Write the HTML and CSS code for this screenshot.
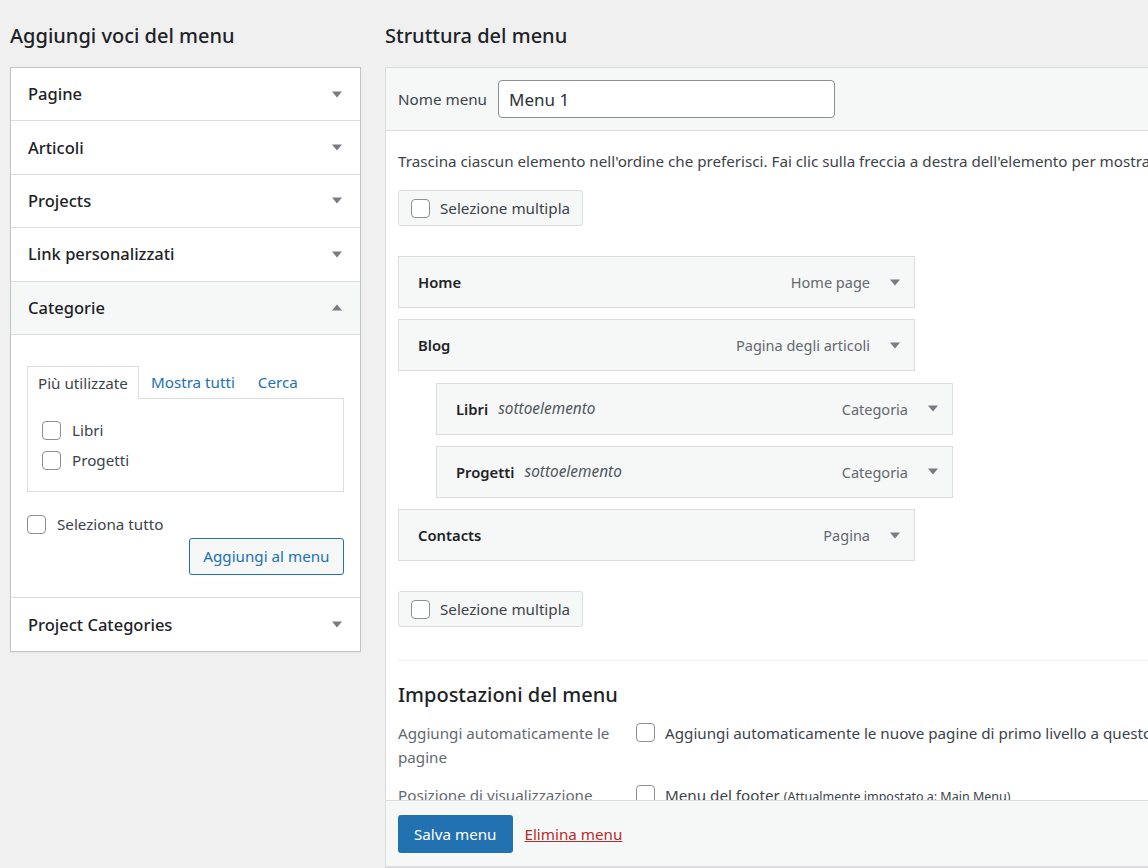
FILE: index.html
```html
<!DOCTYPE html>
<html lang="it">
<head>
<meta charset="utf-8">
<title>Menu</title>
<link rel="stylesheet" href="styles.css">
</head>
<body>
<div class="page">
  <div class="col-left">
    <h2 class="col-title">Aggiungi voci del menu</h2>
    <div class="acc">
      <div class="acc-row"><span class="acc-title">Pagine</span><svg class="arrow" viewBox="0 0 10 6"><polygon points="0,0 10,0 5,6"/></svg></div>
      <div class="acc-row"><span class="acc-title">Articoli</span><svg class="arrow" viewBox="0 0 10 6"><polygon points="0,0 10,0 5,6"/></svg></div>
      <div class="acc-row"><span class="acc-title">Projects</span><svg class="arrow" viewBox="0 0 10 6"><polygon points="0,0 10,0 5,6"/></svg></div>
      <div class="acc-row"><span class="acc-title">Link personalizzati</span><svg class="arrow" viewBox="0 0 10 6"><polygon points="0,0 10,0 5,6"/></svg></div>
      <div class="acc-row open"><span class="acc-title">Categorie</span><svg class="arrow" viewBox="0 0 10 6"><polygon points="0,6 10,6 5,0"/></svg></div>
      <div class="acc-body">
        <div class="tabs">
          <span class="tab active">Più utilizzate</span>
          <span class="tab">Mostra tutti</span>
          <span class="tab">Cerca</span>
        </div>
        <div class="tab-panel">
          <label class="chk-line"><span class="cb"></span>Libri</label>
          <label class="chk-line"><span class="cb"></span>Progetti</label>
        </div>
        <label class="chk-line select-all"><span class="cb"></span>Seleziona tutto</label>
        <div class="add-row"><span class="btn-secondary">Aggiungi al menu</span></div>
      </div>
      <div class="acc-row last"><span class="acc-title">Project Categories</span><svg class="arrow" viewBox="0 0 10 6"><polygon points="0,0 10,0 5,6"/></svg></div>
    </div>
  </div>

  <div class="col-right">
    <h2 class="col-title">Struttura del menu</h2>
    <div class="editor">
      <div class="editor-head">
        <span class="name-label">Nome menu</span>
        <span class="name-input">Menu 1</span>
      </div>
      <div class="editor-body">
        <p class="hint">Trascina ciascun elemento nell'ordine che preferisci. Fai clic sulla freccia a destra dell'elemento per mostrare ulteriori opzioni di configurazione.</p>
        <span class="bulk"><span class="cb"></span>Selezione multipla</span>
        <ul class="items">
          <li class="item"><span class="item-title">Home</span><span class="item-type">Home page</span><svg class="arrow" viewBox="0 0 10 6"><polygon points="0,0 10,0 5,6"/></svg></li>
          <li class="item"><span class="item-title">Blog</span><span class="item-type">Pagina degli articoli</span><svg class="arrow" viewBox="0 0 10 6"><polygon points="0,0 10,0 5,6"/></svg></li>
          <li class="item sub"><span class="item-title">Libri</span><em class="item-sub">sottoelemento</em><span class="item-type">Categoria</span><svg class="arrow" viewBox="0 0 10 6"><polygon points="0,0 10,0 5,6"/></svg></li>
          <li class="item sub"><span class="item-title">Progetti</span><em class="item-sub">sottoelemento</em><span class="item-type">Categoria</span><svg class="arrow" viewBox="0 0 10 6"><polygon points="0,0 10,0 5,6"/></svg></li>
          <li class="item"><span class="item-title">Contacts</span><span class="item-type">Pagina</span><svg class="arrow" viewBox="0 0 10 6"><polygon points="0,0 10,0 5,6"/></svg></li>
        </ul>
        <span class="bulk"><span class="cb"></span>Selezione multipla</span>
        <div class="settings">
          <h3 class="settings-title">Impostazioni del menu</h3>
          <div class="set-row">
            <div class="set-label">Aggiungi automaticamente le pagine</div>
            <label class="set-value"><span class="cb"></span>Aggiungi automaticamente le nuove pagine di primo livello a questo menu</label>
          </div>
          <div class="set-row">
            <div class="set-label">Posizione di visualizzazione</div>
            <label class="set-value"><span class="cb"></span><span>Menu del footer <small class="note">(Attualmente impostato a: Main Menu)</small></span></label>
          </div>
        </div>
      </div>
      <div class="editor-foot">
        <span class="btn-primary">Salva menu</span>
        <a class="delete" href="#">Elimina menu</a>
      </div>
    </div>
  </div>
</div>
</body>
</html>
```
FILE: styles.css
```css
* { box-sizing: border-box; }
html, body { margin: 0; padding: 0; }
body {
  background: #f0f0f1;
  font-family: "Noto Sans", "Open Sans", sans-serif;
  font-size: 15.2px;
  color: #3c434a;
  height: 868px;
  overflow: hidden;
}
.page {
  display: flex;
  padding-left: 10px;
  gap: 24px;
}
.col-left { width: 351px; flex: none; }
.col-right { flex: 1; min-width: 0; }
.col-title {
  margin: 0;
  padding-top: 23px;
  height: 67px;
  font-size: 20px;
  line-height: 26px;
  font-weight: 500;
  color: #1d2327;
}
.acc {
  background: #fff;
  border: 1px solid #c3c4c7;
  box-shadow: 0 1px 1px rgba(0,0,0,.04);
}
.acc-row {
  height: 53.4px;
  display: flex;
  align-items: center;
  justify-content: space-between;
  padding: 0 18px 0 17px;
  border-bottom: 1px solid #dcdcde;
}
.acc-row.open { background: #f6f7f7; }
.acc-row.last { border-bottom: 0; }
.acc-title {
  font-size: 16.5px;
  font-weight: 500;
  color: #1d2327;
  margin-top: -1px;
}
.arrow { width: 10px; height: 7px; fill: #787c82; flex: none; }
.acc-body {
  padding: 30px 16px 22px 16px;
  border-bottom: 1px solid #dcdcde;
}
.tabs { display: flex; align-items: flex-end; height: 33px; }
.tab {
  color: #2271b1;
  padding: 0 11px;
  line-height: 32px;
}
.tab.active {
  color: #3c434a;
  background: #fff;
  border: 1px solid #dcdcde;
  border-bottom: 0;
  height: 33px;
  margin-bottom: -1px;
  position: relative;
  padding: 0 10px;
}
.tab + .tab:not(.active) { padding-left: 12px; padding-right: 11px; }
.tab-panel {
  border: 1px solid #dcdcde;
  height: 94px;
  padding: 22px 14px 0 14px;
  display: flex;
  flex-direction: column;
  gap: 11px;
}
.chk-line {
  display: flex;
  align-items: center;
  gap: 11px;
  color: #3c434a;
  line-height: 19px;
}
.cb {
  width: 19px;
  height: 19px;
  border: 1px solid #8c8f94;
  border-radius: 4px;
  background: #fff;
  flex: none;
  display: inline-block;
}
.select-all { margin-top: 23px; }
.add-row { display: flex; justify-content: flex-end; margin-top: 4px; }
.btn-secondary {
  display: inline-flex;
  align-items: center;
  height: 37px;
  padding: 0 13.5px;
  border: 1px solid #2271b1;
  border-radius: 3px;
  background: #f6f7f7;
  color: #2271b1;
}

.editor {
  background: #fff;
  border: 1px solid #dcdcde;
  border-right: 0;
  height: 801px;
  display: flex;
  flex-direction: column;
}
.editor-head {
  background: #f6f7f7;
  border-bottom: 1px solid #dcdcde;
  height: 63px;
  display: flex;
  align-items: center;
  padding-left: 12px;
  gap: 11px;
  flex: none;
}
.name-label { color: #3c434a; }
.name-input {
  width: 337px;
  height: 38px;
  border: 1px solid #8c8f94;
  border-radius: 4px;
  background: #fff;
  display: flex;
  align-items: center;
  padding-left: 10px;
  font-size: 17px;
  color: #2c3338;
}
.editor-body {
  flex: 1;
  overflow: hidden;
  padding: 0 0 0 12px;
}
.hint {
  margin: 19px 0 0 0;
  white-space: nowrap;
  line-height: 22px;
  color: #3c434a;
}
.bulk {
  display: inline-flex;
  align-items: center;
  gap: 10px;
  height: 36px;
  margin-top: 18px;
  padding: 0 12px;
  background: #f6f7f7;
  border: 1px solid #dcdcde;
  border-radius: 3px;
  color: #3c434a;
}
.items {
  list-style: none;
  margin: 30px 0 12px 0;
  padding: 0;
  display: flex;
  flex-direction: column;
  gap: 11.3px;
}
.item {
  width: 517px;
  height: 52px;
  background: #f6f7f7;
  border: 1px solid #dcdcde;
  display: flex;
  align-items: center;
  padding: 0 14px 0 19px;
}
.item.sub { margin-left: 38px; }
.item-title { font-weight: 600; font-size: 14.8px; color: #1d2327; }
.item-sub { font-size: 15.4px; color: #50575e; margin-left: 10px; }
.item-type { margin-left: auto; margin-right: 20px; color: #646970; font-size: 14.5px; }
.settings {
  margin-top: 33px;
  border-top: 1px solid #f0f0f1;
}
.settings-title {
  margin: 21px 0 13px 0;
  font-size: 20px;
  line-height: 26px;
  font-weight: 500;
  color: #1d2327;
}
.set-row {
  display: flex;
  margin-bottom: 14px;
}
.set-label {
  width: 238px;
  flex: none;
  color: #646970;
  line-height: 24px;
  padding-right: 12px;
}
.set-value {
  display: flex;
  align-items: flex-start;
  gap: 10px;
  white-space: nowrap;
  line-height: 24px;
  color: #3c434a;
}
.set-value .cb { margin-top: 2px; }
.note { font-size: 12.5px; color: #3c434a; }
.editor-foot {
  flex: none;
  height: 67px;
  background: #f6f7f7;
  border-top: 1px solid #dcdcde;
  border-bottom: 1px solid #dcdcde;
  display: flex;
  align-items: center;
  padding-left: 12px;
  gap: 12px;
}
.btn-primary {
  display: inline-flex;
  align-items: center;
  height: 38px;
  padding: 0 16px;
  background: #2271b1;
  border-radius: 3px;
  color: #fff;
}
.delete { color: #b32d2e; text-decoration: underline; }
```
